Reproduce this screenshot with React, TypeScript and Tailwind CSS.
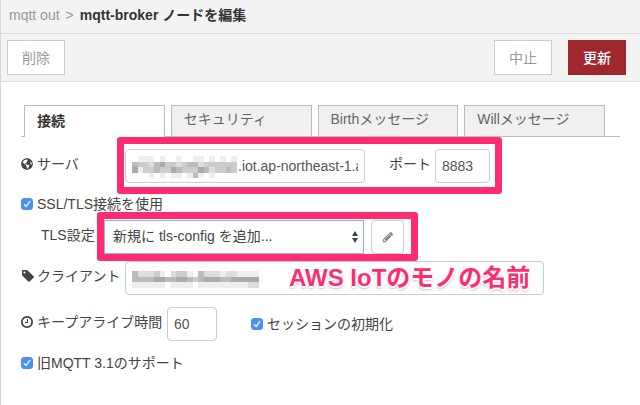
import React, { useState } from "react";
import { FaGlobeAmericas } from "react-icons/fa";

const TABS = ["接続", "セキュリティ", "Birthメッセージ", "Willメッセージ"];

// rows of grey levels, one digit per block (0 = clear, 9 = darkest)
const HOST_MASK = [
  "0111010010011010101",
  "4332453323442333333",
  "5133433543335423343",
  "0001010110141010000",
];
const CLIENT_MASK = [
  "42223102331042221221111",
  "44445544554345554455555",
  "11111101111011111111122",
];

const Mosaic: React.FC<{ rows: string[]; className: string }> = ({ rows, className }) => (
  <svg
    viewBox={`0 0 ${rows[0].length} ${rows.length}`}
    preserveAspectRatio="none"
    shapeRendering="crispEdges"
    className={className}
    aria-hidden="true"
  >
    {rows.map((row, y) =>
      row.split("").map((level, x) => (
        <rect key={`${x}-${y}`} x={x} y={y} width="1" height="1" fill="#555" opacity={Number(level) * 0.1} />
      ))
    )}
  </svg>
);

const TagIcon = () => (
  <svg viewBox="0 0 1792 1792" className="w-[14px] h-[14px] shrink-0" fill="currentColor">
    <path d="M576 448q0-53-37.5-90.5t-90.5-37.5-90.5 37.5-37.5 90.5 37.5 90.5 90.5 37.5 90.5-37.5 37.5-90.5zm1067 576q0 53-37 90l-491 492q-39 37-91 37-53 0-90-37l-715-716q-38-37-64.5-101t-26.5-117v-416q0-52 38-90t90-38h416q53 0 117 26.5t102 64.5l715 714q37 39 37 91z" />
  </svg>
);

const ClockIcon = () => (
  <svg viewBox="128 128 1536 1536" className="w-3 h-3 shrink-0" fill="currentColor">
    <path d="M1024 544v448q0 14-9 23t-23 9h-320q-14 0-23-9t-9-23v-64q0-14 9-23t23-9h224v-352q0-14 9-23t23-9h64q14 0 23 9t9 23zm416 352q0-148-73-273t-198-198-273-73-273 73-198 198-73 273 73 273 198 198 273 73 273-73 198-198 73-273zm224 0q0 209-103 385.5t-279.5 279.5-385.5 103-385.5-103-279.5-279.5-103-385.5 103-385.5 279.5-279.5 385.5-103 385.5 103 279.5 279.5 103 385.5z" />
  </svg>
);

const PencilIcon = () => (
  <svg viewBox="0 0 1792 1792" className="w-3 h-3" fill="currentColor">
    <path d="M491 1536l91-91-235-235-91 91v107h128v128h107zm523-928q0-22-22-22-10 0-17 7l-542 542q-7 7-7 17 0 22 22 22 10 0 17-7l542-542q7-7 7-17zm-54-192l416 416-832 832h-416v-416zm683 96q0 53-37 90l-166 166-416-416 166-165q36-38 90-38 53 0 91 38l235 234q37 39 37 91z" />
  </svg>
);

const Check: React.FC<{ label: string }> = ({ label }) => {
  const [checked, setChecked] = useState(true);
  return (
    <label className="flex items-center gap-1">
      <span className="relative flex">
        <input
          type="checkbox"
          checked={checked}
          onChange={e => setChecked(e.target.checked)}
          className="appearance-none w-3 h-3 rounded-[3px] border border-gray-400 checked:border-[#4a90f5] checked:bg-[#4a90f5]"
        />
        {checked && (
          <svg viewBox="0 0 12 12" className="absolute inset-0 w-3 h-3 pointer-events-none" fill="none" stroke="white" strokeWidth="1.3">
            <path d="M3 6.3 L5.2 8.6 L9 3.2" />
          </svg>
        )}
      </span>
      {label}
    </label>
  );
};

const inputStyle = "h-[34px] border border-[#ccc] rounded-[4px] bg-white text-[#555] outline-none";

export default function App() {
  const [tab, setTab] = useState(0);

  return (
    <div className="min-h-screen bg-white border-l border-[#d8d8d8] text-[14px] leading-5 text-[#444] font-['Liberation_Sans','Noto_Sans_CJK_JP',sans-serif]">
      <header className="h-[34px] pl-2 pb-1 flex items-center gap-[6px] bg-[#f3f3f3] border-b border-[#ddd]">
        <span className="text-[#999]">mqtt out</span>
        <span className="text-[#999]">&gt;</span>
        <h1 className="font-bold text-[#333]">mqtt-broker ノードを編集</h1>
      </header>
      <div className="h-12 pl-[6px] pr-[14px] flex items-center gap-4 bg-[#f3f3f3] border-b border-[#ddd]">
        <button className="w-[58px] h-[35px] mr-auto bg-white border border-[#ccc] text-[#999]">削除</button>
        <button className="w-[58px] h-[35px] bg-white border border-[#ccc] text-[#999]">中止</button>
        <button className="w-[58px] h-[35px] bg-[#a0282d] font-medium text-white">更新</button>
      </div>

      <main className="pl-5 pr-5 pt-[23px]">
        <div role="tablist" className="flex gap-[6px] pl-[3px] pr-[15px] border-b border-[#bbb]">
          {TABS.map((name, i) => (
            <button
              key={name}
              role="tab"
              aria-selected={tab === i}
              onClick={() => setTab(i)}
              className={
                tab === i
                  ? "flex-1 h-8 -mb-px pl-3 pb-px text-left font-bold text-[#333] bg-white border border-b-0 border-[#bbb]"
                  : "flex-1 h-[31px] pl-3 pb-1 text-left text-[#666] bg-[#f0f0f0] border border-b-0 border-[#bbb]"
              }
            >
              {name}
            </button>
          ))}
        </div>

        <form className="pt-3" onSubmit={e => e.preventDefault()}>
          <div className="flex items-center">
            <label htmlFor="server" className="w-[104px] pb-1 flex items-center gap-1">
              <FaGlobeAmericas className="w-3 h-3" />
              サーバ
            </label>
            <div className="relative flex items-center">
              <input id="server" className={`${inputStyle} w-[240px] pl-[112px] pr-[6px]`} defaultValue=".iot.ap-northeast-1.amazonaws.com" />
              <Mosaic rows={HOST_MASK} className="absolute left-[7px] top-[7px] w-[105px] h-[22px]" />
              <label htmlFor="port" className="pl-6 pr-1 pb-1 w-[70px]">ポート</label>
              <input id="port" className={`${inputStyle} w-[55px] px-[6px]`} defaultValue="8883" />
              <div className="absolute -left-2 -right-3 -top-3 -bottom-[11px] border-[7px] border-[#ff2d6f] rounded-[3px] pointer-events-none" />
            </div>
          </div>

          <div className="h-[37px] pt-[11px]">
            <Check label="SSL/TLS接続を使用" />
          </div>

          <div className="flex items-center pl-5">
            <label htmlFor="tls" className="w-[63px] pb-1">TLS設定</label>
            <div className="relative flex gap-[7px]">
              <select id="tls" className="appearance-none h-[34px] w-[260px] px-2 pb-[2px] bg-white border border-[#8ab4ea] text-[#444] outline-none">
                <option>新規に tls-config を追加...</option>
              </select>
              <svg viewBox="0 0 6 12" className="absolute left-[248px] top-[11px] w-[6px] h-3 pointer-events-none" fill="#444">
                <path d="M3 0 L6 5 H0 Z M3 12 L0 7 H6 Z" />
              </svg>
              <button aria-label="TLS設定を編集" className="w-[33px] h-[34px] flex items-center justify-center bg-white border border-[#ccc] rounded-[4px] text-[#888]">
                <PencilIcon />
              </button>
              <div className="absolute -left-[7px] -right-[14px] -top-2 -bottom-[7px] border-[7px] border-[#ff2d6f] rounded-[3px] pointer-events-none" />
            </div>
          </div>

          <div className="flex items-center pt-[7px]">
            <label htmlFor="client" className="w-[104px] pb-1 flex items-center gap-[2px]">
              <TagIcon />
              クライアント
            </label>
            <div className="relative flex">
              <input id="client" className={`${inputStyle} w-[419px] px-[6px]`} />
              <Mosaic rows={CLIENT_MASK} className="absolute left-[7px] top-[10px] w-[127px] h-[17px]" />
              <span className="absolute left-[164px] top-0 text-[24px] leading-[34px] font-bold whitespace-nowrap text-[#ff2d6f] pointer-events-none [text-shadow:-2px_0_white,2px_0_white,0_-2px_white,0_2px_white,1px_1px_white,0_2px_3px_#888]">
                AWS IoTのモノの名前
              </span>
            </div>
          </div>

          <div className="flex items-center pt-3">
            <label htmlFor="keepalive" className="w-[146px] pb-1 flex items-center gap-1">
              <ClockIcon />
              キープアライブ時間
            </label>
            <input id="keepalive" className={`${inputStyle} w-[50px] mr-[34px] px-[6px]`} defaultValue="60" />
            <Check label="セッションの初期化" />
          </div>

          <div className="pt-3">
            <Check label="旧MQTT 3.1のサポート" />
          </div>
        </form>
      </main>
    </div>
  );
}
